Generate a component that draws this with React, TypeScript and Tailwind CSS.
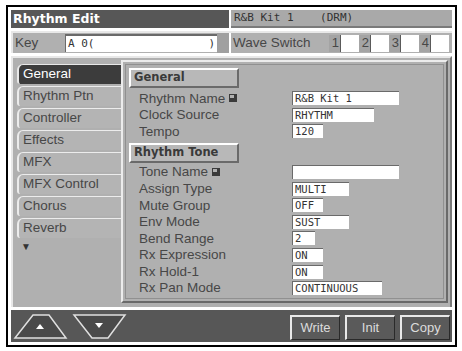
import React from "react";

const tabs = [
  "General",
  "Rhythm Ptn",
  "Controller",
  "Effects",
  "MFX",
  "MFX Control",
  "Chorus",
  "Reverb",
];

type Row = { label: string; value: string; w: number; icon?: boolean };

const generalRows: Row[] = [
  { label: "Rhythm Name", value: "R&B Kit 1", w: 107, icon: true },
  { label: "Clock Source", value: "RHYTHM", w: 82 },
  { label: "Tempo", value: "120", w: 31 },
];

const toneRows: Row[] = [
  { label: "Tone Name", value: "", w: 107, icon: true },
  { label: "Assign Type", value: "MULTI", w: 57 },
  { label: "Mute Group", value: "OFF", w: 31 },
  { label: "Env Mode", value: "SUST", w: 57 },
  { label: "Bend Range", value: "2", w: 23 },
  { label: "Rx Expression", value: "ON", w: 31 },
  { label: "Rx Hold-1", value: "ON", w: 31 },
  { label: "Rx Pan Mode", value: "CONTINUOUS", w: 90 },
];

const sans = "font-['Liberation_Sans','Arial',sans-serif]";
const bold = "font-['DejaVu_Sans','Liberation_Sans',sans-serif]";
const mono = "font-['DejaVu_Sans_Mono','Liberation_Mono',monospace]";

const EditIcon = () => (
  <span className="inline-block w-[8px] h-[8px] bg-[#3a3a3a] ml-[4px]">
    <span className="block w-[4px] h-[3px] bg-[#b0b0b0] ml-[1px] mt-[1px]" />
  </span>
);

const ParamRow = ({ row }: { row: Row }) => (
  <div className="flex items-center h-[16.6px]">
    <div className={`w-[166px] pl-[13px] text-[13.5px] leading-none text-[#474747] ${sans} flex items-center`}>
      {row.label}
      {row.icon && <EditIcon />}
    </div>
    <div
      style={{ width: row.w }}
      className={`h-[14px] bg-white border-t border-l border-[#6a6a6a] pl-[2px] text-[10.5px] leading-[13px] text-[#333] ${mono} whitespace-pre`}
    >
      {row.value}
    </div>
  </div>
);

const SectionHeader = ({ text }: { text: string }) => (
  <div className="ml-[3px] w-[110px] h-[20px] bg-[#b8b8b8] border-t-2 border-l-2 border-white border-r-2 border-b-2 border-r-[#6a6a6a] border-b-[#6a6a6a] flex items-center pl-[3px]">
    <span className={`text-[11.5px] font-bold text-[#3a3a3a] ${bold}`}>{text}</span>
  </div>
);

const WaveBox = ({ n }: { n: string }) => (
  <div className="flex items-center">
    <div className="w-[12px] h-[17px] bg-[#a4a4a4] border-r border-[#5a5a5a] flex items-center justify-end pr-[1px] text-[13px] text-[#474747]">
      {n}
    </div>
    <div className="w-[18px] h-[17px] bg-white" />
  </div>
);

export default function App() {
  return (
    <div className="w-[462px] h-[351px] bg-white pt-[5px] pl-[6px]">
      <div className="w-[451px] h-[342px] border-2 border-black bg-white p-[3px] flex flex-col">
        {/* title bar */}
        <div className="h-[18px] flex">
          <div className="w-[218px] bg-[#575757] flex items-center pl-[2px]">
            <span className={`text-white font-bold text-[12.5px] ${bold}`}>Rhythm Edit</span>
          </div>
          <div className="w-[2px] bg-white" />
          <div className="flex-1 bg-[#a9a9a9] border-b-2 border-[#7a7a7a] flex items-center pl-[3px]">
            <span className={`text-[11px] text-[#333] ${mono} whitespace-pre`}>R&amp;B Kit 1    (DRM)</span>
          </div>
        </div>

        {/* key row */}
        <div className={`mt-[3px] h-[22px] flex bg-[#b0b0b0] border-t-2 border-l-2 border-[#e8e8e8] ${sans}`}>
          <div className="w-[52px] flex items-center pl-[2px] text-[13.5px] text-[#474747]">Key</div>
          <div className="w-[152px] my-[1px] bg-white border-t-2 border-l border-[#6a6a6a] flex items-center justify-between px-[2px]">
            <span className={`text-[11px] text-[#333] ${mono}`}>A 0(</span>
            <span className={`text-[11px] text-[#333] ${mono}`}>)</span>
          </div>
          <div className="w-[12px] bg-[#a0a0a0]" />
          <div className="flex-1 flex items-center border-l-2 border-white bg-[#b0b0b0] pl-[2px]">
            <span className="text-[13.5px] text-[#474747] w-[96px]">Wave Switch</span>
            <WaveBox n="1" />
            <WaveBox n="2" />
            <WaveBox n="3" />
            <WaveBox n="4" />
          </div>
        </div>

        {/* main area */}
        <div className="mt-[3px] flex-1 flex bg-[#b0b0b0] border-t-2 border-l-2 border-[#e8e8e8] border-r-2 border-r-[#7a7a7a]">
          <div className="w-[108px] pt-[6px] flex flex-col">
            {tabs.map((t, i) => (
              <div
                key={t}
                className={`ml-[4px] h-[20px] mb-[2px] rounded-tl-[6px] rounded-bl-[3px] border-t border-l-2 flex items-center pl-[4px] text-[13.5px] ${sans} ${
                  i === 0
                    ? "bg-[#3c3c3c] text-white border-[#e8e8e8]"
                    : "bg-[#b4b4b4] text-[#474747] border-[#ececec]"
                }`}
              >
                {t}
              </div>
            ))}
            <div className="ml-[8px] text-[10px] text-[#333] leading-none mt-[1px]">▼</div>
          </div>
          <div className="flex-1 mt-[2px] mb-[4px] mr-[2px] border-2 border-t-[#ececec] border-l-[#ececec] border-r-[#6a6a6a] border-b-[#6a6a6a] p-[2px]">
            <div className="h-full border border-[#909090] bg-[#b0b0b0] pt-[3px]">
              <SectionHeader text="General" />
              <div className="mt-[2px]">
                {generalRows.map((r) => (
                  <ParamRow key={r.label} row={r} />
                ))}
              </div>
              <div className="mt-[3px]">
                <SectionHeader text="Rhythm Tone" />
              </div>
              <div className="mt-[1px]">
                {toneRows.map((r) => (
                  <ParamRow key={r.label} row={r} />
                ))}
              </div>
            </div>
          </div>
        </div>

        {/* bottom bar */}
        <div className="mt-[3px] h-[32px] bg-[#575757] flex items-end justify-between pl-[2px] pr-[2px] pb-[2px]">
          <div className="flex items-end gap-[4px]">
            <svg width="55" height="28" viewBox="0 0 55 28">
              <polygon points="2,26 20,3 36,3 53,26" fill="#4a4a4a" stroke="#e0e0e0" strokeWidth="1.5" />
              <polygon points="27,12 31,17 23,17" fill="#fff" />
            </svg>
            <svg width="55" height="28" viewBox="0 0 55 28">
              <polygon points="2,3 53,3 36,26 20,26" fill="#4a4a4a" stroke="#e0e0e0" strokeWidth="1.5" />
              <polygon points="23,11 31,11 27,16" fill="#fff" />
            </svg>
          </div>
          <div className={`flex gap-[5px] ${sans}`}>
            {["Write", "Init", "Copy"].map((b) => (
              <div
                key={b}
                className="w-[50px] h-[25px] bg-[#5a5a5a] border-t-2 border-l-2 border-[#e8e8e8] border-r border-b border-r-[#2a2a2a] border-b-[#2a2a2a] flex items-center justify-center text-[13px] text-[#dcdcdc]"
              >
                {b}
              </div>
            ))}
          </div>
        </div>
      </div>
    </div>
  );
}
